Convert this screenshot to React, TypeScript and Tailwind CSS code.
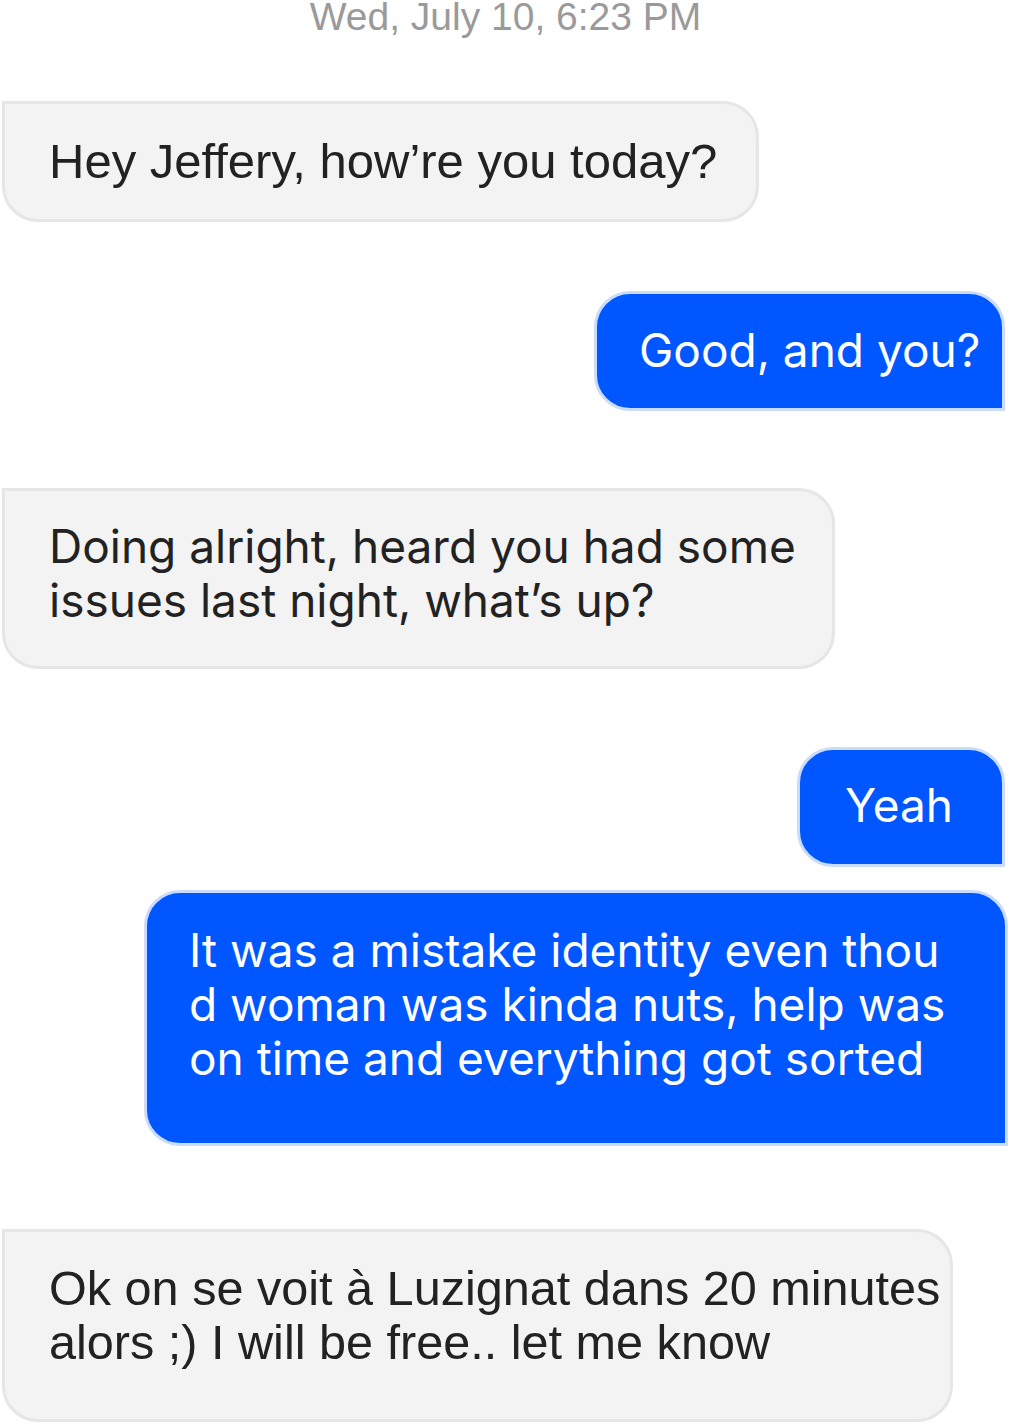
const arial = { fontFamily: '"Liberation Sans", Arial, sans-serif' }
const sf = { fontFamily: 'Inter, "Noto Sans", sans-serif' }

function Received({ className, font, children }: { className: string; font: React.CSSProperties; children: React.ReactNode }) {
    return (
        <div
            className={`self-start ml-[2px] rounded-[36px] rounded-tl-none border-[3px] border-[#e6e6e6] bg-[#f3f3f3] text-[#222222] whitespace-nowrap ${className}`}
            style={font}
        >
            {children}
        </div>
    )
}

function Sent({ className, children }: { className: string; children: React.ReactNode }) {
    return (
        <div
            className={`self-end rounded-[36px] rounded-br-none border-[3px] border-[#c9dcfb] bg-[#0057ff] text-white whitespace-nowrap text-[46px] leading-[54px] ${className}`}
            style={sf}
        >
            {children}
        </div>
    )
}

export default function App() {
    return (
        <div className="flex flex-col w-[1011px] h-[1425px] bg-white overflow-hidden">
            <div className="text-center text-[39px] leading-[34px] text-[#9a9a9a]" style={arial}>
                Wed, July 10, 6:23 PM
            </div>

            <Received className="mt-[67px] w-[757px] pl-[44px] pt-[30px] pb-[31px] text-[49px] leading-[54px]" font={arial}>
                Hey Jeffery, how’re you today?
            </Received>

            <Sent className="mt-[69px] mr-[6px] w-[411px] pl-[42px] pt-[29px] pb-[31px]">
                Good, and you?
            </Sent>

            <Received className="mt-[77px] w-[833px] pl-[44px] pt-[28px] pb-[39px] text-[46px] leading-[54px]" font={sf}>
                Doing alright, heard you had some
                <br />
                issues last night, what’s up?
            </Received>

            <Sent className="mt-[78px] mr-[6px] w-[208px] pl-[45px] pt-[28px] pb-[32px] text-[45px]">
                Yeah
            </Sent>

            <Sent className="mt-[23px] mr-[3px] w-[864px] pl-[42px] pt-[30px] pb-[58px]">
                It was a mistake identity even thou
                <br />
                d woman was kinda nuts, help was
                <br />
                on time and everything got sorted
            </Sent>

            <Received className="mt-[83px] w-[951px] pl-[44px] pt-[29px] pb-[50px] text-[48.6px] leading-[54px]" font={arial}>
                Ok on se voit à Luzignat dans 20 minutes
                <br />
                alors ;) I will be free.. let me know
            </Received>
        </div>
    )
}
